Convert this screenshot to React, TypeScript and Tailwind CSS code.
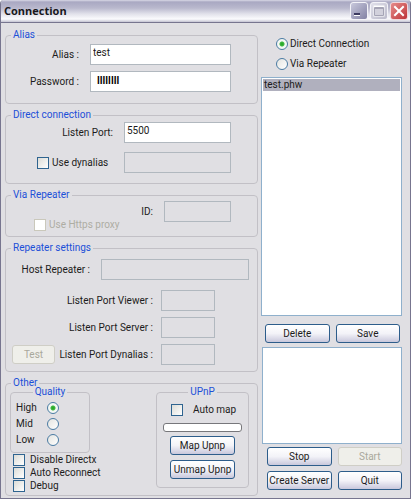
import { useState } from "react";
import type { ReactNode } from "react";

const checkClass =
  "appearance-none shrink-0 size-3 border border-[#2f6490] bg-linear-to-br from-[#dcdcd7] to-white checked:bg-[#21a121] disabled:border-[#cac8bb] disabled:bg-none disabled:bg-white";

const radioClass =
  "appearance-none shrink-0 size-3 rounded-full border border-[#4a7ba3] bg-linear-to-br from-[#e4e4e0] to-white checked:bg-[radial-gradient(circle,#21a121_0,#3fb83f_2px,#f4f8f4_3px)]";

function Group({ title, center, className, children }: { title: string; center?: boolean; className: string; children: ReactNode }) {
  return (
    <fieldset className="min-w-0 rounded border border-[#c2c0c6]">
      <legend className={`h-3 px-[2px] leading-3 text-[#1c50d8] ${center ? "mx-auto" : "ml-[5px]"}`}>{title}</legend>
      <div className={className}>{children}</div>
    </fieldset>
  );
}

function Field({ id, label, value, width, disabled }: { id: string; label?: string; value?: string; width: string; disabled?: boolean }) {
  return (
    <>
      {label && <label htmlFor={id} className="whitespace-nowrap">{label}</label>}
      <input
        id={id}
        type="text"
        defaultValue={value}
        disabled={disabled}
        className={`h-[21px] min-w-0 border border-[#b1b8bf] bg-white px-[2px] pb-1 disabled:bg-transparent ${width}`}
      />
    </>
  );
}

function Button({ children, className = "", disabled }: { children: ReactNode; className?: string; disabled?: boolean }) {
  return (
    <button
      type="button"
      disabled={disabled}
      className={`flex h-[19px] min-w-0 items-center justify-center rounded-[3px] border border-[#2d5d8b] bg-linear-to-b from-white via-[#f3f3f8] to-[#c9c8dc] whitespace-nowrap disabled:border-[#cfcec6] disabled:bg-none disabled:bg-[#efefea] disabled:text-[#a9a89c] ${className}`}
    >
      {children}
    </button>
  );
}

function TitleBar() {
  return (
    <header className="flex h-[23px] items-center justify-between border-b border-[#77758f] bg-[linear-gradient(#d9d9e6_0,#a9a8c2_2px,#b9b8cd_8px,#e2e2eb_14px,#fbfbfd_19px,#c4c3d2_22px)] pr-[2px] pl-[3px]">
      <h1 className="font-['Open_Sans',sans-serif] text-[11px] font-bold text-[#17171c]">Connection</h1>
      <div className="flex gap-[2px]">
        <button type="button" aria-label="Minimize" className="size-[18px] rounded-[3px] border border-[#f3f3f8] bg-linear-to-br from-[#c9c9dc] to-[#8382a4]">
          <svg viewBox="0 0 16 16" className="size-4"><path d="M3 10h6v3H3z" fill="#fff" /><path d="M3 10h6v2H3z" fill="#3c3a60" /></svg>
        </button>
        <button type="button" aria-label="Maximize" disabled className="size-[18px] rounded-[3px] border border-[#f3f3f8] bg-linear-to-br from-[#e0e0ea] to-[#bcbbcb]">
          <svg viewBox="0 0 16 16" className="size-4"><path d="M3.5 3.5h9v9h-9zM3.5 5h9" fill="none" stroke="#fff" strokeWidth="2" /><path d="M3.5 4.5h9v8h-9zM3.5 5.5h9" fill="#d2d1dc" stroke="#a5a4b5" /></svg>
        </button>
        <button type="button" aria-label="Close" className="size-[18px] rounded-[3px] border border-[#f0d6da] bg-linear-to-br from-[#e58a8a] to-[#bd3039]">
          <svg viewBox="0 0 16 16" className="size-4"><path d="M4 4l8 8M12 4l-8 8" stroke="#fff" strokeWidth="2" strokeLinecap="square" /></svg>
        </button>
      </div>
    </header>
  );
}

export default function App() {
  const [mode, setMode] = useState("direct");
  const [quality, setQuality] = useState("High");

  return (
    <main className="w-full overflow-hidden rounded-t border border-t-0 border-[#77758f] bg-[#e0dfe3] font-[Roboto,sans-serif] text-[10px] leading-3 text-[#1c1c20]">
      <TitleBar />
      <form className="flex gap-[3px] pr-2 pb-[2px] pl-1">
        <div className="flex min-w-0 flex-1 flex-col gap-[5px] pt-[6px]">
          <Group title="Alias" className="pt-[3px] pr-[26px] pb-[11px]">
            <div className="flex flex-col gap-[6px]">
              <div className="flex items-center justify-end gap-[11px]">
                <Field id="alias" label="Alias :" value="test" width="w-[141px]" />
              </div>
              <div className="flex items-center justify-end gap-[11px]">
                <label htmlFor="password">Password :</label>
                <input
                  id="password"
                  type="text"
                  defaultValue="llllllll"
                  className="h-[21px] w-[141px] min-w-0 border border-[#b1b8bf] bg-white px-[6px] pb-[2px] font-['Liberation_Sans',sans-serif] font-bold text-black"
                />
              </div>
            </div>
          </Group>

          <Group title="Direct connection" className="pt-px pr-[26px] pb-[10px]">
            <div className="flex flex-col gap-[9px]">
              <div className="flex items-center justify-end gap-[11px]">
                <Field id="port" label="Listen Port:" value="5500" width="w-[107px]" />
              </div>
              <div className="flex items-center justify-end">
                <label className="flex w-[87px] items-center gap-[3px]">
                  <input type="checkbox" className={checkClass} />
                  Use dynalias
                </label>
                <input aria-label="Dynalias" type="text" disabled className="h-[21px] w-[107px] min-w-0 border border-[#b1b8bf] px-[2px]" />
              </div>
            </div>
          </Group>

          <Group title="Via Repeater" className="pr-[26px] pl-[28px]">
            <div className="flex justify-between">
              <label className="mt-[18px] mb-[5px] flex items-center gap-[3px] self-end text-[#aeada3]">
                <input type="checkbox" disabled className={checkClass} />
                Use Https proxy
              </label>
              <div className="flex items-center gap-[11px] self-start">
                <Field id="repeater-id" label="ID:" width="w-[67px]" disabled />
              </div>
            </div>
          </Group>

          <Group title="Repeater settings" className="pt-[5px] pr-2 pb-[6px] pl-[6px]">
            <div className="flex items-center justify-end gap-[11px]">
              <Field id="host" label="Host Repeater :" width="w-[148px]" disabled />
            </div>
            <div className="mt-[10px] flex flex-col gap-[6px] pr-[34px]">
              <div className="flex items-center justify-end gap-2">
                <Field id="port-viewer" label="Listen Port Viewer :" width="w-[54px]" disabled />
              </div>
              <div className="flex items-center justify-end gap-2">
                <Field id="port-server" label="Listen Port Server :" width="w-[54px]" disabled />
              </div>
              <div className="flex items-center justify-between">
                <Button disabled className="w-[43px]">Test</Button>
                <div className="flex items-center gap-2">
                  <Field id="port-dynalias" label="Listen Port Dynalias :" width="w-[54px]" disabled />
                </div>
              </div>
            </div>
          </Group>

          <Group title="Other" className="pr-2 pb-[3px] pl-1">
            <div className="-mt-[3px] flex items-start justify-between">
              <div>
                <div className="w-20">
                  <Group title="Quality" center className="px-[5px] pt-[2px] pb-1">
                    {["High", "Mid", "Low"].map(q => (
                      <label key={q} className="flex h-4 items-center">
                        <span className="w-[31px]">{q}</span>
                        <input type="radio" name="quality" checked={quality === q} onChange={() => setQuality(q)} className={radioClass} />
                      </label>
                    ))}
                  </Group>
                </div>
                {["Disable Directx", "Auto Reconnect", "Debug"].map(o => (
                  <label key={o} className="flex h-[13px] items-center gap-[5px] pl-[3px]">
                    <input type="checkbox" className={checkClass} />
                    {o}
                  </label>
                ))}
              </div>
              <div className="w-[93px]">
                <Group title="UPnP" center className="px-[6px] pt-[5px] pb-2">
                  <label className="flex h-[13px] items-center gap-[10px] pl-2">
                    <input type="checkbox" className={checkClass} />
                    Auto map
                  </label>
                  <div role="progressbar" aria-label="UPnP progress" className="mt-[7px] h-[9px] rounded-[3px] border border-[#77777b] bg-white" />
                  <Button className="mx-auto mt-1 w-[65px]">Map Upnp</Button>
                  <Button className="mx-auto mt-[5px] w-[65px]">Unmap Upnp</Button>
                </Group>
              </div>
            </div>
          </Group>
        </div>

        <div className="w-[141px] shrink-0 pt-[15px]">
          <div className="flex flex-col gap-2 pl-[15px]">
            <label className="flex items-center gap-[2px]">
              <input type="radio" name="mode" checked={mode === "direct"} onChange={() => setMode("direct")} className={radioClass} />
              Direct Connection
            </label>
            <label className="flex items-center gap-[2px]">
              <input type="radio" name="mode" checked={mode === "repeater"} onChange={() => setMode("repeater")} className={radioClass} />
              Via Repeater
            </label>
          </div>
          <select aria-label="Saved connections" size={8} defaultValue="test.phw" className="mt-[7px] block h-[239px] w-full overflow-hidden border border-[#8fb0cc] bg-white p-px">
            <option value="test.phw" className="h-3 min-h-0 p-0 px-px leading-3 text-[#1c1c20] checked:bg-[#b0b0be] checked:text-[#1c1c20]">test.phw</option>
          </select>
          <div className="mt-2 grid grid-cols-2 gap-[6px] pr-[2px] pl-1">
            <Button>Delete</Button>
            <Button>Save</Button>
          </div>
          <textarea aria-label="Log" readOnly className="mt-1 ml-auto block h-[97px] w-[99%] resize-none border border-[#8fb0cc] bg-white" />
          <div className="mt-[3px] grid grid-cols-2 gap-x-[6px] gap-y-[5px] pl-[6px]">
            <Button>Stop</Button>
            <Button disabled>Start</Button>
            <Button>Create Server</Button>
            <Button>Quit</Button>
          </div>
        </div>
      </form>
    </main>
  );
}
